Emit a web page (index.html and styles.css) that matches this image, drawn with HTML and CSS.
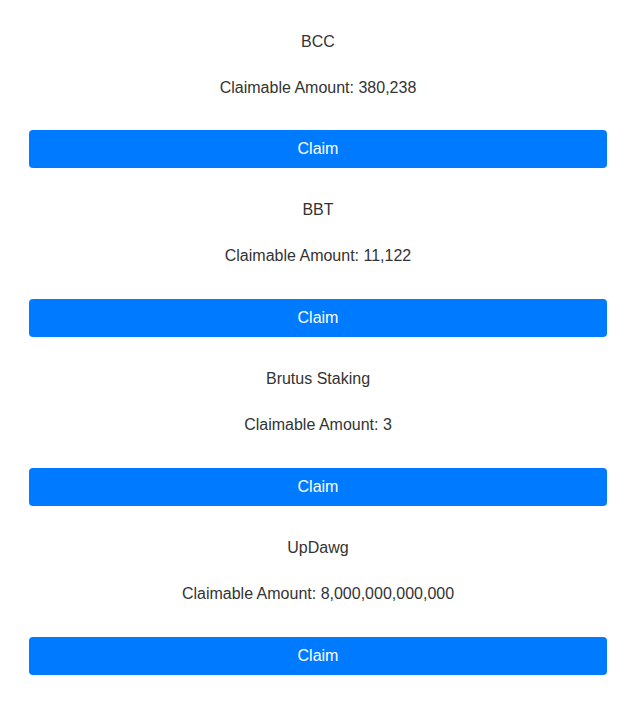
FILE: index.html
```html
<!DOCTYPE html>
<html>
<head>
<meta charset="utf-8">
<link rel="stylesheet" href="styles.css">
</head>
<body>
<div class="list">
  <div class="item">
    <p class="title">BCC</p>
    <p class="amount">Claimable Amount: 380,238</p>
    <button class="claim">Claim</button>
  </div>
  <div class="item">
    <p class="title">BBT</p>
    <p class="amount">Claimable Amount: 11,122</p>
    <button class="claim">Claim</button>
  </div>
  <div class="item">
    <p class="title">Brutus Staking</p>
    <p class="amount">Claimable Amount: 3</p>
    <button class="claim">Claim</button>
  </div>
  <div class="item">
    <p class="title">UpDawg</p>
    <p class="amount">Claimable Amount: 8,000,000,000,000</p>
    <button class="claim">Claim</button>
  </div>
</div>
</body>
</html>
```
FILE: styles.css
```css
html, body {
  margin: 0;
  padding: 0;
  background: #fff;
}
body {
  font-family: "Liberation Sans", Arial, sans-serif;
  font-size: 16px;
  color: #333;
}
.list {
  padding: 29.5px 24px 0 29px;
  display: flex;
  flex-direction: column;
  gap: 30.35px;
}
.item {
  display: flex;
  flex-direction: column;
  text-align: center;
}
.title, .amount {
  margin: 0;
  line-height: 24px;
}
.amount {
  margin-top: 22px;
}
.claim {
  margin-top: 30.5px;
  height: 38px;
  width: 578px;
  border: none;
  border-radius: 4px;
  background: #007bff;
  color: #fff;
  font-family: "Liberation Sans", Arial, sans-serif;
  font-size: 16px;
  padding: 0;
}
```
